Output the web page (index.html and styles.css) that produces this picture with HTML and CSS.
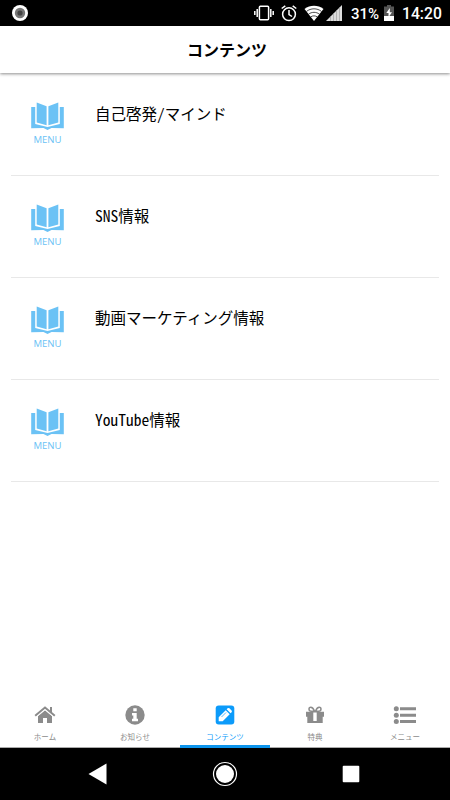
FILE: index.html
```html
<!DOCTYPE html>
<html lang="ja">
    <head>
        <meta charset="UTF-8" />
        <meta name="viewport" content="width=device-width, initial-scale=1.0" />
        <title>コンテンツ</title>
        <link rel="stylesheet" href="styles.css">
    </head>
    <body>
        <svg class="defs" width="0" height="0">
            <symbol id="book" viewBox="0 0 33 28">
                <path d="M5.700.6 15.600 4.200v19L5.700 20.600zM27.300.6 17.400 4.200v19l9.900-2.600z" />
                <path d="M.2 5h4v17l12.300 3 12.300-3V5h4v21.200l-12.300-.2-4 1.900-4-1.900-12.300.2z" />
            </symbol>
        </svg>
        <div class="status-bar">
            <svg class="record" width="16" height="16" viewBox="0 0 16 16">
                <circle cx="8" cy="8" r="8" fill="#fff" />
                <circle cx="8" cy="8" r="5.200" fill="#777" />
                <circle cx="8" cy="8" r="2.600" fill="#444" />
            </svg>
            <div class="status-icons">
                <svg class="vibrate" width="20" height="16" viewBox="0 0 20 16">
                    <g fill="none" stroke="#fff" stroke-width="1.500">
                        <rect x="5.400" y="1.300" width="9.200" height="13.400" rx="1" />
                        <path d="M3.200 4v8M.8 6v4M16.800 4v8M19.200 6v4" />
                    </g>
                </svg>
                <svg class="alarm" width="16" height="17" viewBox="0 0 16 17">
                    <g fill="none" stroke="#fff" stroke-width="1.500">
                        <circle cx="8" cy="9.200" r="6.400" />
                        <path d="M8 5v4.500l3 2M.7 3.500 4.300.8M15.300 3.500 11.700.8" />
                    </g>
                </svg>
                <svg class="wifi" width="20" height="16" viewBox="0 0 20 16">
                    <path d="M.5 4C6-.4 14-.4 19.500 4L10 16z" fill="#fff" />
                    <path d="M2.400 6.500c4.500-3.600 10.700-3.600 15.200 0M4.500 9.200c3.300-2.500 7.700-2.500 11 0M6.700 11.900c2-1.400 4.600-1.400 6.600 0" fill="none" stroke="#000" stroke-width=".7" />
                </svg>
                <svg class="signal" width="16" height="16" viewBox="0 0 16 16">
                    <path d="M0 16 16 0v16z" fill="#ddd" />
                    <path d="M4.500 11.500V16M7.500 8.500V16M10.500 5.500V16M13.500 2.500V16" stroke="#aaa" stroke-width=".8" />
                </svg>
                <span class="battery-level">31%</span>
                <svg class="battery" width="10" height="16" viewBox="0 0 10 16">
                    <path d="M3 0h4v1.500h3V11H0V1.500h3z" fill="#555" />
                    <path d="M0 11h10v5H0z" fill="#fff" />
                    <path d="M5.800 3 2.300 8h2.200v4.200L8 7.200H5.800z" fill="#fff" />
                </svg>
                <span class="clock">14:20</span>
            </div>
        </div>
        <header class="header">コンテンツ</header>
        <main class="content">
            <a class="row">
                <div class="row-icon">
                    <svg width="33" height="28"><use href="#book" /></svg>
                    <span>MENU</span>
                </div>
                <div class="row-title">自己啓発/マインド</div>
            </a>
            <a class="row">
                <div class="row-icon">
                    <svg width="33" height="28"><use href="#book" /></svg>
                    <span>MENU</span>
                </div>
                <div class="row-title">SNS情報</div>
            </a>
            <a class="row">
                <div class="row-icon">
                    <svg width="33" height="28"><use href="#book" /></svg>
                    <span>MENU</span>
                </div>
                <div class="row-title">動画マーケティング情報</div>
            </a>
            <a class="row">
                <div class="row-icon">
                    <svg width="33" height="28"><use href="#book" /></svg>
                    <span>MENU</span>
                </div>
                <div class="row-title">YouTube情報</div>
            </a>
        </main>
        <nav class="tabs">
            <a class="tab">
                <svg width="22" height="20" viewBox="0 0 22 20">
                    <path d="M11 5.200 18 11v7h-5v-5H9v5H4v-7z" />
                    <path d="M1.200 10.800 11 2.500l9.800 8.300M17 2v5" fill="none" stroke="currentColor" stroke-width="2" />
                    <path d="M2.500 12 11 4.900l8.500 7.100" fill="none" stroke="#fff" stroke-width=".7" />
                </svg>
                <span>ホーム</span>
            </a>
            <a class="tab">
                <svg width="20" height="20" viewBox="0 0 20 20">
                    <circle cx="10" cy="10" r="9.700" />
                    <path d="M8.300 3.300h3.400v3H8.300zM7 8h4.700v5.700H13v2.600H7v-2.600h1.300v-3.100H7z" fill="#fff" />
                </svg>
                <span>お知らせ</span>
            </a>
            <a class="tab active">
                <svg width="20" height="20" viewBox="0 0 20 20">
                    <rect x=".7" y=".5" width="18.600" height="19" rx="3" />
                    <path d="m3.700 12.200 7-7 4 4-7 7h-4zM11.600 4.300l1-1q.9-.7 1.800 0l2.200 2.200q.7.900 0 1.800l-1 1z" fill="#fff" />
                    <path d="m6.500 12 4.500-4.500" stroke="currentColor" stroke-width=".7" />
                </svg>
                <span>コンテンツ</span>
            </a>
            <a class="tab">
                <svg width="20" height="20" viewBox="0 0 20 20">
                    <path d="M1 6.800h18v5h-1.300V18H2.300v-6.200H1z" />
                    <path d="M8.300 7.500h3.400V16H8.300z" fill="#fff" />
                    <path d="M9.500 6.200C8.300 3 7 2.200 5.800 2.200c-2.400 0-2.500 4 .5 4zM10.500 6.200c1.200-3.200 2.500-4 3.700-4 2.400 0 2.500 4-.5 4z" fill="none" stroke="currentColor" stroke-width="1.500" />
                </svg>
                <span>特典</span>
            </a>
            <a class="tab">
                <svg width="24" height="20" viewBox="0 0 24 20">
                    <circle cx="3.300" cy="3.800" r="2.500" />
                    <circle cx="3.300" cy="10.200" r="2.500" />
                    <circle cx="3.300" cy="16.500" r="2.500" />
                    <path d="M7 2.300h16v3H7zM7 8.700h16v3H7zM7 15h16v3H7z" />
                </svg>
                <span>メニュー</span>
            </a>
        </nav>
        <div class="nav-bar">
            <svg width="19" height="22" viewBox="0 0 19 22"><path d="M.5 11 18.500.5v21z" /></svg>
            <svg width="26" height="26" viewBox="0 0 26 26">
                <circle cx="13" cy="13" r="11.500" fill="none" stroke="#fff" stroke-width="1.200" />
                <circle cx="13" cy="13" r="9" />
            </svg>
            <svg width="18" height="18" viewBox="0 0 18 18"><rect x=".7" y=".7" width="16.600" height="16.600" rx="1" /></svg>
        </div>
    </body>
</html>
```
FILE: styles.css
```css
* {
    box-sizing: border-box;
}
body {
    margin: 0;
    height: 800px;
    display: flex;
    flex-direction: column;
    background-color: #fff;
    font-family: "Noto Sans CJK JP", sans-serif;
    color: #000;
    overflow: hidden;
}
svg {
    display: block;
    flex: none;
    fill: currentColor;
}
.defs {
    position: absolute;
}
.status-bar {
    height: 26px;
    flex: none;
    display: flex;
    justify-content: space-between;
    align-items: center;
    padding: 0 9px 0 12px;
    background-color: #000;
    color: #fff;
    font: 500 16px/26px Roboto, sans-serif;
}
.status-icons {
    display: flex;
    align-items: center;
}
.vibrate {
    margin-right: 7px;
}
.alarm {
    margin-right: 7px;
}
.wifi {
    margin-right: 2px;
}
.signal {
    margin-right: 9px;
}
.battery-level {
    width: 33px;
    font-size: 15px;
    padding-top: 2px;
}
.battery {
    margin-right: 8px;
}
.clock {
    width: 39px;
    padding-top: 2px;
    font-size: 15.7px;
    white-space: nowrap;
}
.header {
    height: 47px;
    flex: none;
    text-align: center;
    font-size: 16px;
    font-weight: 700;
    line-height: 46px;
    padding-left: 4px;
    box-shadow: 0 1px 3px rgba(0, 0, 0, 0.45);
}
.content {
    flex: 1;
    padding: 1px 11px 0;
}
.row {
    display: flex;
    height: 102px;
    border-bottom: 1px solid #e8e8e8;
}
.row-icon {
    width: 73px;
    margin-right: 11px;
    padding-top: 28px;
    display: flex;
    flex-direction: column;
    align-items: center;
    color: #6bc2f5;
}
.row-icon span {
    font-family: "Open Sans", sans-serif;
    font-size: 9.6px;
    line-height: 14px;
    margin-top: 3px;
}
.row-title {
    padding-top: 27px;
    font-size: 15.5px;
    line-height: 24px;
    white-space: nowrap;
    /* half-width latin letters next to the kanji */
    font-feature-settings: "hwid";
}
.tabs {
    height: 48px;
    flex: none;
    display: flex;
    margin-top: auto;
    border-bottom: 1px solid #aaa;
}
.tab {
    flex: 1;
    display: flex;
    flex-direction: column;
    align-items: center;
    padding-top: 5px;
    color: #8b8b8b;
    font-size: 7.5px;
    line-height: 12px;
}
.tab span {
    margin-top: 6px;
}
.tab.active {
    color: #0c9bfa;
    border-bottom: 3px solid #0c94ec;
    margin-bottom: -1px;
}
.nav-bar {
    height: 52px;
    flex: none;
    display: flex;
    justify-content: space-between;
    align-items: center;
    padding: 0 90px 0 88px;
    background-color: #000;
    color: #fff;
}
```
